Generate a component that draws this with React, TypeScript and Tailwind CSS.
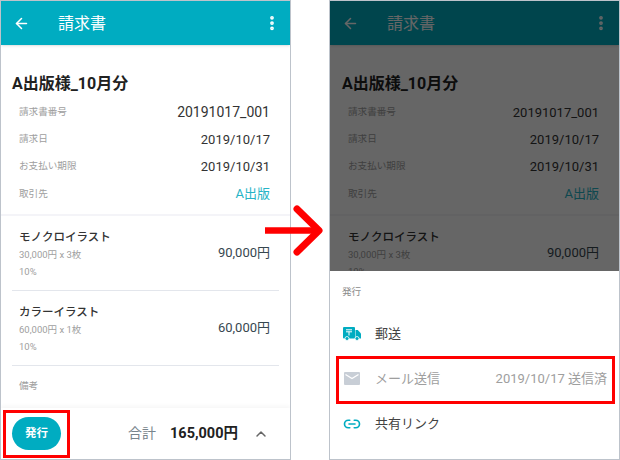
import { ArrowLeft, ChevronUp, EllipsisVertical, Link2 } from "lucide-react";

const infoRows = [
  { label: "請求日", value: "2019/10/17" },
  { label: "お支払い期限", value: "2019/10/31" },
];

const items = [
  { name: "モノクロイラスト", detail: "30,000円 x 3枚", price: "90,000円" },
  { name: "カラーイラスト", detail: "60,000円 x 1枚", price: "60,000円" },
];

const Invoice = ({ lines }: { lines: number }) => (
  <>
    <header className="h-[44px] bg-[#00acc1] flex items-center pl-[12px] pr-[16px] text-white shadow-sm">
      <ArrowLeft size={17} strokeWidth={2.2} />
      <h1 className="ml-[28px] text-[16px] leading-none flex-1 pt-[1px]">請求書</h1>
      <EllipsisVertical size={18} strokeWidth={3} className="mr-[-7px]" />
    </header>
    <div className="pl-[11px] pr-[9px] pt-[29px]">
      <h2 className={lines > 1 ? "text-[16px] leading-[20px] font-bold text-[#212121]" : "ml-[1px] text-[16px] leading-[20px] font-bold text-[#212121]"}>
        A出版様_10月分
      </h2>
      <div className="mt-[5px] pl-[7px] pr-[11px]">
        <div className="h-[27px] flex items-center justify-between">
          <span className="text-[9.6px] text-[#9e9e9e]">請求書番号</span>
          <span className={lines > 1 ? "text-[14px] text-[#333333]" : "text-[13px] text-[#333333]"}>20191017_001</span>
        </div>
        {infoRows.map((row) => (
          <div key={row.label} className="h-[27px] flex items-center justify-between">
            <span className="text-[9.6px] text-[#9e9e9e]">{row.label}</span>
            <span className="text-[13px] text-[#333333]">{row.value}</span>
          </div>
        ))}
        <div className="h-[28px] flex items-center justify-between">
          <span className="text-[9.6px] text-[#9e9e9e]">取引先</span>
          <span className="text-[13px] text-[#26b3c6]">A出版</span>
        </div>
      </div>
    </div>
    <div className="mt-[6px] h-[2px] bg-[#f4f4f8]" />
    {items.slice(0, lines).map((item) => (
      <div key={item.name} className="mx-[11px] pl-[7px] pr-[9px] h-[75px] border-b border-[#e3e6ec] flex items-center justify-between">
        <div className="pt-[1px]">
          <div className="text-[11.5px] leading-[16px] font-medium text-[#333333]">{item.name}</div>
          <div className="mt-[3px] text-[9.5px] leading-[14px] text-[#a0a0a0]">{item.detail}</div>
          <div className="mt-[3px] text-[9.5px] leading-[14px] text-[#a0a0a0]">10%</div>
        </div>
        <span className="text-[13px] text-[#37474f]">{item.price}</span>
      </div>
    ))}
    <div className="px-[18px] pt-[12px] text-[9.6px] leading-[16px] text-[#9e9e9e]">{lines > 1 ? "備考" : ""}</div>
  </>
);

const Footer = () => (
  <footer className="absolute left-0 right-0 bottom-0 h-[51px] bg-white flex items-center pl-[11px] pr-[21px] shadow-[0_-2px_4px_rgba(0,0,0,0.04)]">
    <button className="w-[49px] h-[33px] rounded-full bg-[#00acc1] text-white text-[11.5px] font-bold">発行</button>
    <span className="ml-auto text-[14px] text-[#78848c]">合計</span>
    <span className="ml-[14px] text-[14.5px] font-bold text-[#212121]">165,000円</span>
    <ChevronUp size={16} strokeWidth={2.2} className="ml-[15px] text-[#666666]" />
  </footer>
);

const Phone = ({ children }: { children: React.ReactNode }) => (
  <div className="relative w-[291px] h-[460px] border border-[#bdc3cb] bg-white overflow-hidden">{children}</div>
);

const TruckIcon = () => (
  <svg width="18" height="14" viewBox="0 0 18 14" fill="none">
    <path d="M1 0h10a1 1 0 0 1 1 1v10.500H1a1 1 0 0 1-1-1V1a1 1 0 0 1 1-1z" fill="#00acc1" />
    <path d="M12.500 3h2.300L18 6.500v5h-5.500z" fill="#00acc1" />
    <path d="M3 2.800h6M3 4.800h6M6 4.800V8.500" stroke="#fff" strokeWidth="1" />
    <circle cx="4" cy="11.500" r="2" fill="#00acc1" stroke="#fff" strokeWidth="0.800" />
    <circle cx="14" cy="11.500" r="2" fill="#00acc1" stroke="#fff" strokeWidth="0.800" />
  </svg>
);

const MailIcon = () => (
  <svg width="16" height="13" viewBox="0 0 16 13">
    <rect width="16" height="13" rx="1" fill="#c8ced6" />
    <path d="M1.500 2.500 8 6.500l6.500-4" fill="none" stroke="#fff" strokeWidth="1.300" />
  </svg>
);

const BottomSheet = () => (
  <div className="absolute left-0 right-0 bottom-0 h-[188px] bg-white">
    <div className="pl-[12px] pt-[14px] text-[9.6px] leading-[14px] text-[#8a8a8a]">発行</div>
    <div className="mt-[12px]">
      <div className="h-[45px] flex items-center pl-[13px]">
        <span className="w-[32px]"><TruckIcon /></span>
        <span className="text-[13px] text-[#424242]">郵送</span>
      </div>
      <div className="h-[45px] flex items-center pl-[14px] pr-[12px]">
        <span className="w-[31px]"><MailIcon /></span>
        <span className="text-[13px] text-[#9e9e9e]">メール送信</span>
        <span className="ml-auto text-[13px] text-[#9e9e9e]">2019/10/17 送信済</span>
      </div>
      <div className="h-[45px] flex items-center pl-[13px]">
        <span className="w-[32px]"><Link2 size={18} strokeWidth={2.2} className="text-[#00acc1]" /></span>
        <span className="text-[13px] text-[#424242]">共有リンク</span>
      </div>
    </div>
  </div>
);

export default function App() {
  return (
    <div
      className="relative w-[620px] h-[460px] bg-white flex justify-between"
      style={{ fontFamily: 'Roboto, "Noto Sans CJK JP", sans-serif' }}
    >
      <Phone>
        <Invoice lines={2} />
        <Footer />
      </Phone>
      <Phone>
        <Invoice lines={1} />
        <div className="absolute inset-0 bg-black/60" />
        <BottomSheet />
      </Phone>
      {/* annotations */}
      <div className="absolute left-[3px] top-[410px] w-[67px] h-[48px] border-[3px] border-[#ff0000]" />
      <div className="absolute left-[336px] top-[356px] w-[279px] h-[48px] border-[3px] border-[#ff0000]" />
      <svg className="absolute left-[262px] top-[202px]" width="64" height="56" viewBox="0 0 64 56" fill="none">
        <path d="M3 28.500h52" stroke="#ff0000" strokeWidth="6.500" />
        <path d="M35 7l22 21.500L35 50" stroke="#ff0000" strokeWidth="7" strokeLinecap="round" strokeLinejoin="round" />
      </svg>
    </div>
  );
}
